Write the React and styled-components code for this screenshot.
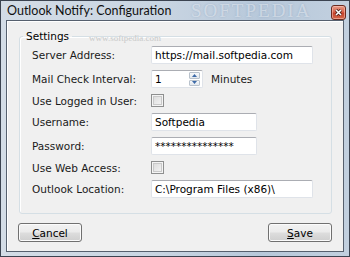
import styled, { createGlobalStyle } from "styled-components";

const GlobalStyle = createGlobalStyle`
  html, body {
    margin: 0;
    padding: 0;
    background: #c4d1df;
  }
  * {
    box-sizing: border-box;
  }
`;

const uiFont = `"DejaVu Sans", Verdana, sans-serif`;

const Window = styled.div`
  position: relative;
  width: 350px;
  height: 257px;
  border: 1px solid #3b4350;
  background: linear-gradient(to right, #d3dce6 0%, #c9d5e2 45%, #b7c8da 75%, #c2d0df 100%);
  display: flex;
  flex-direction: column;
  overflow: hidden;
`;

const TitleBar = styled.div`
  position: relative;
  height: 19px;
  display: flex;
  align-items: center;
  justify-content: space-between;
  padding: 0 3px 0 6px;
`;

const Title = styled.span`
  position: relative;
  z-index: 1;
  font-family: "Segoe UI", Lato, "Liberation Sans", sans-serif;
  font-size: 12.5px;
  color: #101010;
`;

const Watermark = styled.span`
  position: absolute;
  left: 190px;
  top: -1px;
  font-family: "Liberation Serif", serif;
  font-size: 19px;
  letter-spacing: 2px;
  color: rgba(255, 255, 255, 0.45);
  text-shadow: 0 0 2px rgba(90, 120, 160, 0.35);
  pointer-events: none;
`;

const CloseButton = styled.div`
  position: relative;
  z-index: 1;
  width: 15px;
  height: 15px;
  margin-top: 3px;
  border: 1px solid #6b2a1f;
  border-radius: 3px;
  background: linear-gradient(#e79b88 0%, #d9644c 45%, #c4402a 55%, #d56a4c 100%);
  box-shadow: inset 0 0 0 1px rgba(255, 210, 200, 0.5);
  display: flex;
  align-items: center;
  justify-content: center;
`;

const Frame = styled.div`
  flex: 1;
  display: flex;
  padding: 0 5px 4px 5px;
`;

const Client = styled.div`
  flex: 1;
  border: 1px solid #56606e;
  background: #f0f0f0;
  box-shadow: inset 1px 1px 0 #ffffff;
  padding: 9px 11px 0 12px;
  display: flex;
  flex-direction: column;
`;

const GroupBox = styled.fieldset`
  position: relative;
  margin: 0;
  padding: 3px 0 15px 12px;
  border: 1px solid #d5dfe5;
  border-radius: 3px;
  box-shadow: inset 1px 1px 0 #fff;
  display: flex;
  flex-direction: column;
  gap: 6px;
`;

const Legend = styled.legend`
  font-family: ${uiFont};
  font-size: 10.5px;
  line-height: 13px;
  color: #000;
  padding: 0 3px;
  margin-left: -9px;
`;

const SiteMark = styled.span`
  position: absolute;
  left: 69px;
  top: -10px;
  font-family: "Liberation Serif", serif;
  font-size: 9px;
  color: #c9c9c9;
  pointer-events: none;
`;

const Row = styled.div`
  display: grid;
  grid-template-columns: 119px auto;
  align-items: center;
  height: ${(p) => p.$h || 18}px;
`;

const Label = styled.span`
  font-family: ${uiFont};
  font-size: 10.5px;
  color: #1a1a1a;
  white-space: nowrap;
`;

const TextBox = styled.input`
  width: ${(p) => p.$w}px;
  height: 18px;
  margin: 0;
  padding: 0 3px;
  border: 1px solid #dfe3e9;
  border-top-color: #abadb3;
  border-radius: 2px;
  background: #fff;
  font-family: ${uiFont};
  font-size: 10.5px;
  color: #000;
  outline: none;
`;

const Inline = styled.div`
  display: flex;
  align-items: center;
  gap: 8px;
`;

const SpinBox = styled.div`
  width: 52px;
  height: 18px;
  display: flex;
  align-items: stretch;
  border: 1px solid #dfe3e9;
  border-top-color: #abadb3;
  border-radius: 2px;
  background: #fff;
  padding: 1px 2px 1px 0;
`;

const SpinInput = styled.input`
  flex: 1;
  min-width: 0;
  margin: 0;
  padding: 0 3px;
  border: none;
  background: transparent;
  font-family: ${uiFont};
  font-size: 10.5px;
  color: #000;
  outline: none;
`;

const SpinColumn = styled.div`
  width: 11px;
  display: flex;
  flex-direction: column;
  gap: 1px;
`;

const SpinButton = styled.div`
  flex: 1;
  border: 1px solid #b9c2cc;
  border-radius: 1px;
  background: linear-gradient(#f6f8fa, #e3e8ee);
  display: flex;
  align-items: center;
  justify-content: center;
`;

const CheckBox = styled.div`
  width: 13px;
  height: 13px;
  border: 1px solid #8e8f8f;
  background: linear-gradient(135deg, #d8d8d8, #f7f7f7);
  box-shadow: inset 0 0 0 1px #f4f4f4, inset 0 0 0 2px #c9c9c9;
`;

const ButtonRow = styled.div`
  display: flex;
  justify-content: space-between;
  margin-top: 9px;
`;

const Button = styled.button`
  width: 64px;
  height: 19px;
  margin: 0;
  padding: 0;
  border: 1px solid #707070;
  border-radius: 3px;
  background: linear-gradient(#f2f2f2 0%, #ebebeb 48%, #dddddd 52%, #cfcfcf 100%);
  box-shadow: inset 0 0 0 1px #fbfbfb;
  font-family: ${uiFont};
  font-size: 10.5px;
  color: #000;
  margin-left: ${(p) => (p.$first ? "-1px" : "0")};

  u {
    text-decoration: underline;
  }
`;

const Arrow = ({ up }) => (
  <svg width="5" height="3" viewBox="0 0 5 3">
    <path d={up ? "M0 3 L2.5 0 L5 3 Z" : "M0 0 L2.5 3 L5 0 Z"} fill="#3d6aa8" />
  </svg>
);

export default function App() {
  return (
    <>
      <GlobalStyle />
      <Window>
        <TitleBar>
          <Title>Outlook Notify: Configuration</Title>
          <Watermark>SOFTPEDIA</Watermark>
          <CloseButton>
            <svg width="7" height="7" viewBox="0 0 7 7">
              <path d="M1 1 L6 6 M6 1 L1 6" stroke="#3a1a14" strokeWidth="3" />
              <path d="M1 1 L6 6 M6 1 L1 6" stroke="#fff" strokeWidth="1.6" />
            </svg>
          </CloseButton>
        </TitleBar>
        <Frame>
          <Client>
            <GroupBox>
              <Legend>Settings</Legend>
              <SiteMark>www.softpedia.com</SiteMark>
              <Row>
                <Label>Server Address:</Label>
                <TextBox $w={162} readOnly defaultValue="https://mail.softpedia.com" />
              </Row>
              <Row>
                <Label>Mail Check Interval:</Label>
                <Inline>
                  <SpinBox>
                    <SpinInput readOnly defaultValue="1" />
                    <SpinColumn>
                      <SpinButton><Arrow up /></SpinButton>
                      <SpinButton><Arrow /></SpinButton>
                    </SpinColumn>
                  </SpinBox>
                  <Label>Minutes</Label>
                </Inline>
              </Row>
              <Row $h={13}>
                <Label>Use Logged in User:</Label>
                <CheckBox />
              </Row>
              <Row>
                <Label>Username:</Label>
                <TextBox $w={106} readOnly defaultValue="Softpedia" />
              </Row>
              <Row>
                <Label>Password:</Label>
                <TextBox $w={106} readOnly defaultValue="***************" />
              </Row>
              <Row $h={13}>
                <Label>Use Web Access:</Label>
                <CheckBox />
              </Row>
              <Row>
                <Label>Outlook Location:</Label>
                <TextBox $w={162} readOnly defaultValue="C:\Program Files (x86)\" />
              </Row>
            </GroupBox>
            <ButtonRow>
              <Button $first><u>C</u>ancel</Button>
              <Button><u>S</u>ave</Button>
            </ButtonRow>
          </Client>
        </Frame>
      </Window>
    </>
  );
}
